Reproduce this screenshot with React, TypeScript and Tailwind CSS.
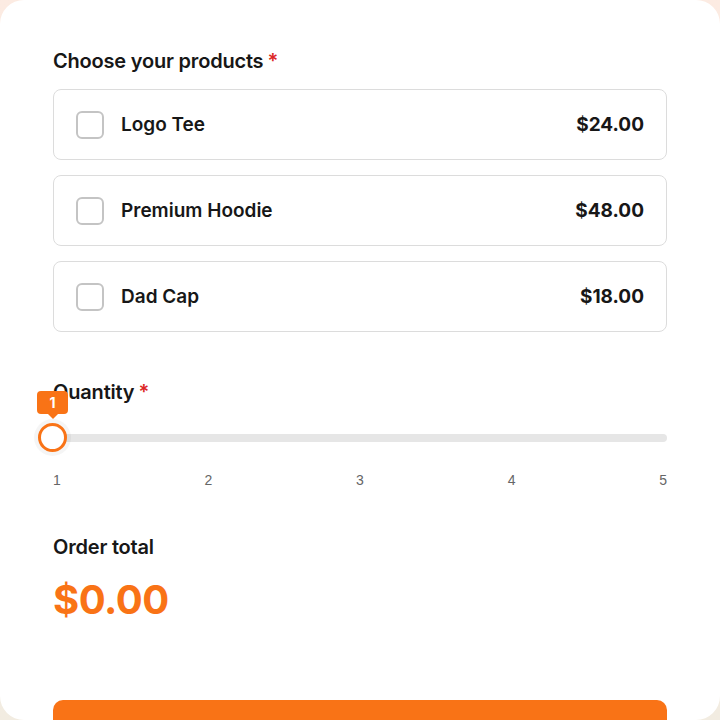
import React, { useState } from 'react';

const products = [
  { id: 'tee', name: 'Logo Tee', price: 24 },
  { id: 'hoodie', name: 'Premium Hoodie', price: 48 },
  { id: 'cap', name: 'Dad Cap', price: 18 },
];

export default function App() {
  const [selected, setSelected] = useState<string[]>([]);
  const [qty] = useState(1);

  const total = products
    .filter((p) => selected.includes(p.id))
    .reduce((sum, p) => sum + p.price * qty, 0);

  const toggle = (id: string) =>
    setSelected((s) => (s.includes(id) ? s.filter((x) => x !== id) : [...s, id]));

  return (
    <div className="min-h-screen bg-gradient-to-b from-[#fcebe2] to-[#f2ece1] font-['Inter',sans-serif] text-[#171717]">
      <div className="bg-white rounded-[24px] h-[720px] overflow-hidden px-[53px] pt-[49px]">
        {/* Products */}
        <h2 className="text-[20px] leading-[24px] font-semibold tracking-[-0.2px]">
          Choose your products<span className="ml-[4px] text-[#dc2626]">*</span>
        </h2>
        <div className="mt-[16px] flex flex-col gap-[15px]">
          {products.map((p) => (
            <label
              key={p.id}
              className="h-[71px] border border-[#dcdcdc] rounded-[8px] flex items-center pl-[22px] pr-[22px] pt-[2px] cursor-pointer"
            >
              <input
                type="checkbox"
                checked={selected.includes(p.id)}
                onChange={() => toggle(p.id)}
                className="sr-only"
              />
              <span className="w-[28px] h-[28px] rounded-[6px] border-2 border-[#c4c4c4] bg-white shrink-0 -mt-[2px]" />
              <span className="ml-[17px] text-[19px] font-semibold">{p.name}</span>
              <span className="ml-auto text-[19px] font-bold">${p.price.toFixed(2)}</span>
            </label>
          ))}
        </div>

        {/* Quantity */}
        <h2 className="mt-[48px] text-[20px] leading-[24px] font-semibold tracking-[-0.2px]">
          Quantity<span className="ml-[4px] text-[#dc2626]">*</span>
        </h2>
        <div className="relative mt-[20px] h-[28px] flex items-center">
          <div className="w-full h-[8px] rounded-full bg-[#e6e6e6]" />
          <div className="absolute left-[-15px] top-[-1px] w-[29px] h-[29px] rounded-full bg-white border-[3px] border-[#f97316] shadow-[0_0_0_4px_rgba(0,0,0,0.04)]" />
          <div className="absolute left-[-16px] top-[-33px] flex flex-col items-center">
            <div className="w-[31px] h-[23px] rounded-[4px] bg-[#f97316] text-white text-[14px] font-bold flex items-center justify-center">
              1
            </div>
            <div className="w-0 h-0 border-l-[5px] border-r-[5px] border-t-[5px] border-l-transparent border-r-transparent border-t-[#f97316]" />
          </div>
        </div>
        <div className="mt-[18px] flex justify-between text-[14px] leading-[20px] text-[#666] font-['Liberation_Sans',sans-serif]">
          <span>1</span>
          <span>2</span>
          <span>3</span>
          <span>4</span>
          <span>5</span>
        </div>

        {/* Total */}
        <h2 className="mt-[45px] text-[20px] leading-[24px] font-semibold tracking-[-0.2px]">Order total</h2>
        <div className="mt-[17px] text-[40px] leading-[48px] font-bold text-[#f97316] tracking-[-0.5px]">
          ${total.toFixed(2)}
        </div>

        <button className="mt-[76px] w-full h-[64px] rounded-[10px] bg-[#f97316] text-white text-[18px] font-semibold">
          Place order
        </button>
      </div>
    </div>
  );
}
